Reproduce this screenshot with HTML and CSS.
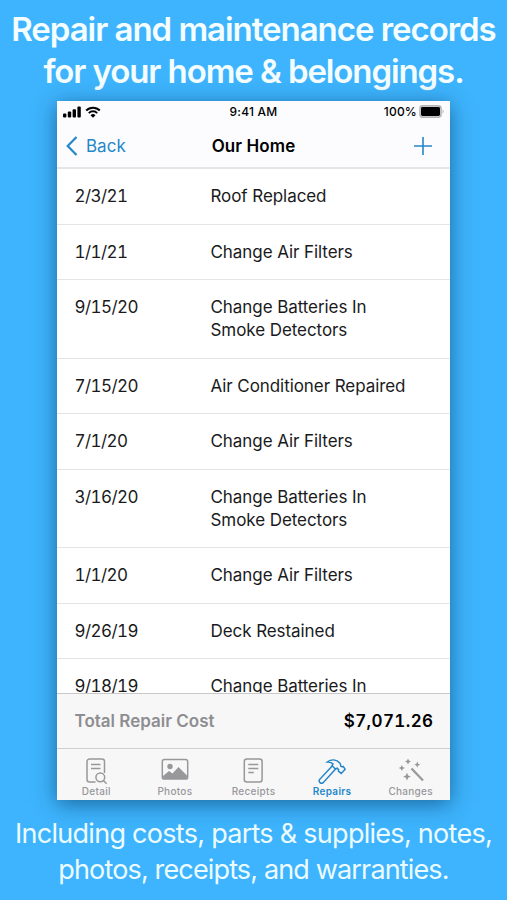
FILE: index.html
```html
<!DOCTYPE html>
<html lang="en">
<head>
  <meta charset="UTF-8" />
  <title>Our Home - Repairs</title>
  <link rel="stylesheet" href="styles.css">
</head>
<body>

<h1 class="headline">Repair and maintenance records<br><span class="line2">for your home &amp; belongings.</span></h1>

<div class="phone">
  <header class="top">
    <div class="status">
      <div class="signal">
        <svg width="19" height="12" viewBox="0 0 19 12">
          <rect x="0" y="7.6" width="3.4" height="4" rx="1"/>
          <rect x="4.8" y="5.6" width="3.4" height="6" rx="1"/>
          <rect x="9.6" y="3.2" width="3.4" height="8.4" rx="1"/>
          <rect x="14.4" y="0.4" width="3.4" height="11.2" rx="1"/>
        </svg>
        <svg width="16" height="12" viewBox="0 0 16 12">
          <path d="M1.2 4.5a9.6 9.6 0 0 1 13.6 0M3.8 7.1a5.9 5.9 0 0 1 8.4 0" fill="none" stroke="#000" stroke-width="2"/>
          <path d="M8 11.8l2.5-2.6a3.5 3.5 0 0 0-5 0z"/>
        </svg>
      </div>
      <div class="time">9:41 AM</div>
      <div class="battery">
        <span>100%</span>
        <svg width="25" height="13" viewBox="0 0 25 13">
          <rect x="1" y="0.9" width="21" height="11.2" rx="2.6" fill="none" stroke="#b4b4b6" stroke-width="1.6"/>
          <rect x="2" y="2" width="19" height="9" rx="1.4"/>
          <path d="M23.500 4.600c1.500.8 1.500 3 0 3.800z" fill="#b4b4b6"/>
        </svg>
      </div>
    </div>
    <nav class="navbar">
      <a class="back">
        <svg width="12" height="20" viewBox="0 0 12 20"><path d="M10.500 1L1.700 10l8.800 9"/></svg>
        <span>Back</span>
      </a>
      <h2>Our Home</h2>
      <a class="add">
        <svg width="18" height="18" viewBox="0 0 18 18"><path d="M9 0v18M0 9h18"/></svg>
      </a>
    </nav>
  </header>

  <ul class="list">
    <li><span class="date">2/3/21</span><span>Roof Replaced</span></li>
    <li><span class="date">1/1/21</span><span>Change Air Filters</span></li>
    <li><span class="date">9/15/20</span><span>Change Batteries In<br>Smoke Detectors</span></li>
    <li><span class="date">7/15/20</span><span>Air Conditioner Repaired</span></li>
    <li><span class="date">7/1/20</span><span>Change Air Filters</span></li>
    <li><span class="date">3/16/20</span><span>Change Batteries In<br>Smoke Detectors</span></li>
    <li><span class="date">1/1/20</span><span>Change Air Filters</span></li>
    <li><span class="date">9/26/19</span><span>Deck Restained</span></li>
    <li><span class="date">9/18/19</span><span>Change Batteries In</span></li>
  </ul>

  <div class="total">
    <span class="label">Total Repair Cost</span>
    <span class="amount">$7,071.26</span>
  </div>

  <div class="tabs">
    <a class="tab">
      <svg width="28" height="28" viewBox="0 0 28 28">
        <path d="M13.500 25H7.500A2.500 2.500 0 0 1 5 22.500v-18A2.500 2.500 0 0 1 7.500 2H20a2.500 2.500 0 0 1 2.500 2.500V16M9 7.500h9.500M9 11.500h9.500"/>
        <circle cx="18.300" cy="20.300" r="4.400"/>
        <path d="M21.400 23.500l3.200 3.300"/>
      </svg>
      <span>Detail</span>
    </a>
    <a class="tab">
      <svg width="28" height="28" viewBox="0 0 28 28">
        <rect x="1.300" y="2.500" width="25.400" height="19.600" rx="2.200"/>
        <circle cx="9" cy="9.500" r="2.700" class="solid"/>
        <path class="solid" d="M2 19l6-5 3.500 2.500L17.500 10 26 18.500V20a2 2 0 0 1-2 2H4a2 2 0 0 1-2-2z"/>
      </svg>
      <span>Photos</span>
    </a>
    <a class="tab">
      <svg width="28" height="28" viewBox="0 0 28 28">
        <rect x="5.300" y="2" width="17.800" height="23" rx="2.500"/>
        <path d="M9.300 7.500h10M9.300 11.500h10M9.300 15.500h5.500"/>
      </svg>
      <span>Receipts</span>
    </a>
    <a class="tab active">
      <svg width="28" height="28" viewBox="0 0 28 28">
        <path d="M9.200 5C13.500 2 18.500 2.300 22 6.300c.8 1 .5 2 .8 3l1.500.7 1-.6 1.900 2.900-4 4.100-2.800-2.300.2-1.500-1.500-1.400-1.700.8-3.300-3.300.9-1.800C13.500 5.100 11.500 5.200 9.200 5z"/>
        <path d="M14.200 8.900L1.300 22.800c-.8 2.300 1.500 4.300 3.600 3.200L17.600 12"/>
      </svg>
      <span>Repairs</span>
    </a>
    <a class="tab">
      <svg width="28" height="28" viewBox="0 0 28 28">
        <path class="wand" d="M14.500 11.500L26 23.500"/>
        <path class="star" d="M11 1.600l1 2 2 1-2 1-1 2-1-2-2-1 2-1zM20.300 4.600l.9 2.100 2.100 1-2.100.9-.9 2.200-1-2.200-2.100-.9 2.100-1zM4.800 8l1 2.100 2.100.9-2.100 1-1 2.100-.9-2.100-2.200-1 2.200-.9zM10 15.700l1.200 2.700 2.700 1.200-2.700 1.200-1.200 2.700-1.200-2.700-2.700-1.200 2.700-1.200z"/>
      </svg>
      <span>Changes</span>
    </a>
  </div>
</div>

<p class="caption"><span class="line1">Including costs, parts &amp; supplies, notes,</span><br><span class="line2">photos, receipts, and warranties.</span></p>

</body>
</html>
```

FILE: styles.css
```css
body {
  margin: 0;
  height: 900px;
  overflow: hidden;
  background: #3db4fd;
  color: #000;
  font-family: Inter, "Liberation Sans", sans-serif;
  display: flex;
  flex-direction: column;
  align-items: center;
}
.headline {
  margin: 9px 0 0;
  height: 92px;
  color: #f4fdff;
  font-size: 33px;
  line-height: 41.5px;
  font-weight: 600;
  letter-spacing: -1.04px;
  text-align: center;
  white-space: nowrap;
}
.headline .line2 {
  letter-spacing: -1.1px;
}
.phone {
  width: 393px;
  height: 698.5px;
  background: #fff;
  box-shadow: 0 4px 20px rgba(0, 40, 80, 0.55);
  display: flex;
  flex-direction: column;
}
.top {
  height: 66px;
  background: #fcfcfe;
  border-bottom: 2px solid #e6e6e8;
}
.status {
  display: grid;
  grid-template-columns: 1fr auto 1fr;
  align-items: center;
  height: 21px;
  padding: 0 6px;
  font-size: 12px;
  font-weight: 500;
  letter-spacing: 0.2px;
}
.signal, .battery {
  display: flex;
  align-items: center;
  gap: 3px;
}
.battery {
  justify-content: flex-end;
  gap: 2px;
}
.navbar {
  display: grid;
  grid-template-columns: 1fr auto 1fr;
  align-items: center;
  height: 47px;
  padding: 0 9px;
  color: #2487c9;
}
.navbar svg {
  display: block;
  fill: none;
  stroke: #2487c9;
  stroke-width: 2.2;
}
.navbar h2 {
  margin: 0;
  color: #000;
  font-size: 17px;
  font-weight: 600;
  letter-spacing: 0.1px;
}
.back {
  display: flex;
  align-items: center;
  gap: 8px;
  font-size: 17px;
}
.add {
  justify-self: end;
  margin-right: 9px;
}
.navbar .add svg {
  stroke-width: 1.6;
}
.list {
  flex: 1;
  min-height: 0;
  overflow: hidden;
  margin: 0;
  padding: 0;
  list-style: none;
}
.list li {
  display: grid;
  grid-template-columns: 136px 1fr;
  padding: 16px 17.5px 15.5px;
  border-bottom: 1px solid #e4e4e5;
  font-size: 17px;
  line-height: 23px;
  letter-spacing: -0.07px;
  color: #1a1a1c;
}
.list .date {
  font-variant-numeric: tabular-nums;
  letter-spacing: -0.55px;
}
.total {
  display: flex;
  justify-content: space-between;
  align-items: center;
  height: 54px;
  padding: 0 16.5px 0 17.5px;
  background: #f7f7f7;
  border-top: 1px solid #c8c8ca;
  font-size: 17px;
  font-weight: 600;
}
.label {
  color: #8e8e92;
}
.amount {
  font-variant-numeric: tabular-nums;
  letter-spacing: 0.4px;
}
.tabs {
  display: grid;
  grid-template-columns: repeat(5, 1fr);
  height: 51px;
  background: #f7f7f7;
  border-top: 1px solid #cfcfd1;
}
.tab {
  display: flex;
  flex-direction: column;
  align-items: center;
  padding-top: 8px;
  color: #98989b;
  font-size: 10px;
  line-height: 13px;
  font-weight: 500;
  letter-spacing: 0.3px;
}
.tab svg {
  display: block;
  fill: none;
  stroke: currentColor;
  stroke-width: 1.5;
}
.tab .solid, .tab .star {
  fill: currentColor;
  stroke: none;
}
.tab .wand {
  stroke-width: 2.2;
}
.tab.active {
  color: #2487c9;
  font-weight: 600;
}
.caption {
  margin: 16px 0 0;
  color: #ecfbff;
  font-size: 27px;
  line-height: 36px;
  text-align: center;
  white-space: nowrap;
}
.caption .line1 {
  letter-spacing: -0.72px;
}
.caption .line2 {
  letter-spacing: -0.85px;
}
```
